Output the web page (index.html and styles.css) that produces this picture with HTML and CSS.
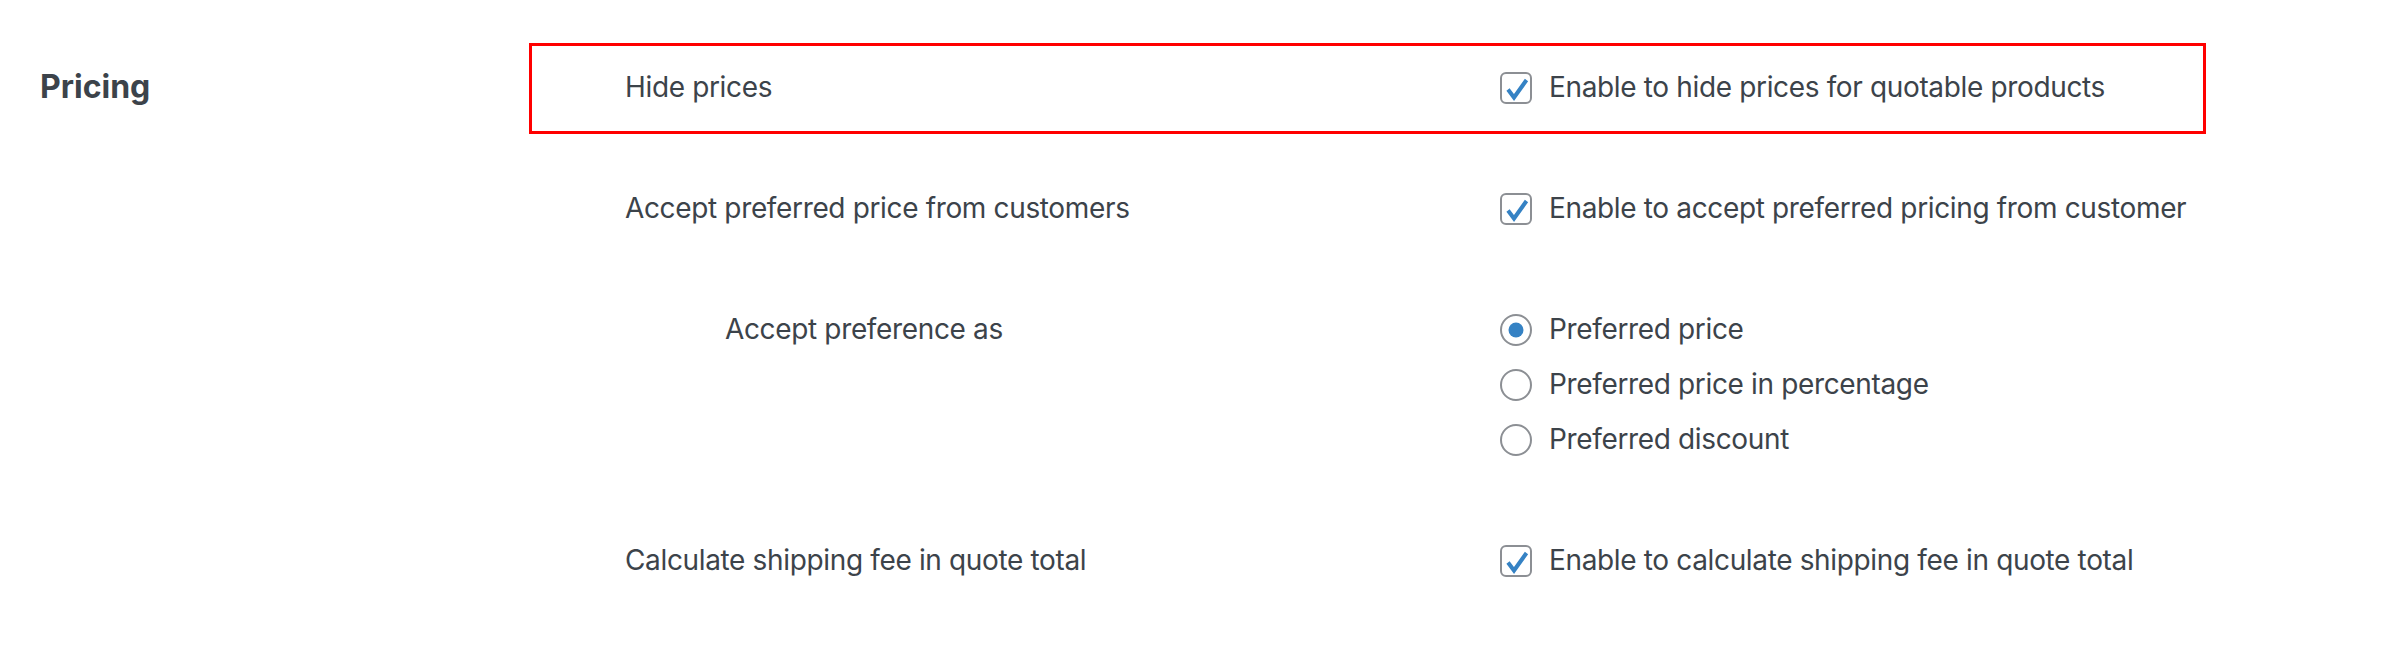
FILE: index.html
```html
<!DOCTYPE html>
<html>
<head>
<title>Quote settings</title>
<link rel="stylesheet" href="styles.css">
</head>
<body>

<div class="settings">
  <h2 class="section-title">Pricing</h2>

  <div class="fields">
    <div class="field highlight">
      <div class="field-label">Hide prices</div>
      <div class="field-input">
        <label class="option">
          <svg class="box" width="32" height="32" viewBox="0 0 32 32"><rect x="1" y="1" width="30" height="30" rx="5" fill="#fff" stroke="#8c8f94" stroke-width="2"/><path d="M8 17.5 L14 25.5 L26.5 8" fill="none" stroke="#3582c4" stroke-width="4"/></svg>
          Enable to hide prices for quotable products
        </label>
      </div>
    </div>

    <div class="field">
      <div class="field-label">Accept preferred price from customers</div>
      <div class="field-input">
        <label class="option">
          <svg class="box" width="32" height="32" viewBox="0 0 32 32"><rect x="1" y="1" width="30" height="30" rx="5" fill="#fff" stroke="#8c8f94" stroke-width="2"/><path d="M8 17.5 L14 25.5 L26.5 8" fill="none" stroke="#3582c4" stroke-width="4"/></svg>
          Enable to accept preferred pricing from customer
        </label>
      </div>
    </div>

    <div class="field">
      <div class="field-label sub">Accept preference as</div>
      <div class="field-input radios">
        <label class="option">
          <svg class="box" width="32" height="32" viewBox="0 0 32 32"><circle cx="16" cy="16" r="15" fill="#fff" stroke="#8c8f94" stroke-width="2"/><circle cx="16" cy="16" r="7.5" fill="#3582c4"/></svg>
          Preferred price
        </label>
        <label class="option">
          <svg class="box" width="32" height="32" viewBox="0 0 32 32"><circle cx="16" cy="16" r="15" fill="#fff" stroke="#8c8f94" stroke-width="2"/></svg>
          Preferred price in percentage
        </label>
        <label class="option">
          <svg class="box" width="32" height="32" viewBox="0 0 32 32"><circle cx="16" cy="16" r="15" fill="#fff" stroke="#8c8f94" stroke-width="2"/></svg>
          Preferred discount
        </label>
      </div>
    </div>

    <div class="field">
      <div class="field-label">Calculate shipping fee in quote total</div>
      <div class="field-input">
        <label class="option">
          <svg class="box" width="32" height="32" viewBox="0 0 32 32"><rect x="1" y="1" width="30" height="30" rx="5" fill="#fff" stroke="#8c8f94" stroke-width="2"/><path d="M8 17.5 L14 25.5 L26.5 8" fill="none" stroke="#3582c4" stroke-width="4"/></svg>
          Enable to calculate shipping fee in quote total
        </label>
      </div>
    </div>
  </div>
</div>

</body>
</html>
```

FILE: styles.css
```css
html {
  background-color: white;
}

body {
  margin: 0px;
  padding: 43px 0 0 40px;
  font-family: Inter, "Noto Sans", sans-serif;
  font-size: 28px;
  letter-spacing: -0.35px;
  color: #3c434a;
}

.settings {
  display: flex;
  align-items: flex-start;
}

.section-title {
  width: 489px;
  margin: 0;
  font-size: 32px;
  font-weight: 700;
  letter-spacing: 0;
  line-height: 87px;
  color: #3c434a;
}

.fields {
  width: 1677px;
  display: flex;
  flex-direction: column;
  gap: 30px;
}

.field {
  display: grid;
  grid-template-columns: 875px 1fr;
  padding: 23px 0 25px 93px;
  border: 3px solid transparent;
  line-height: 37px;
  white-space: nowrap;
}

.field.highlight {
  border-color: #ff0000;
}

.field-label.sub {
  padding-left: 100px;
}

.radios {
  display: flex;
  flex-direction: column;
  gap: 18px;
}

.option {
  display: flex;
  align-items: center;
  gap: 17px;
}

.box {
  flex: none;
}
```
